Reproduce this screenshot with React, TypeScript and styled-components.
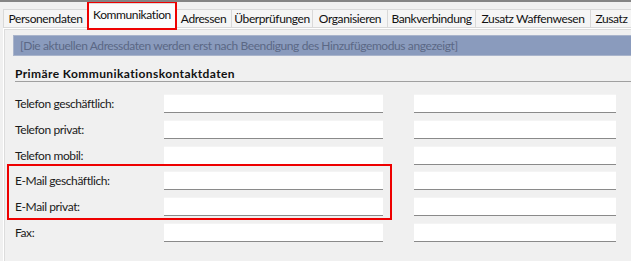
import styled, { createGlobalStyle } from "styled-components";

const GlobalStyle = createGlobalStyle`
  body {
    margin: 0;
    background: #f0f0f0;
    font-family: Lato, "Liberation Sans", sans-serif;
    font-size: 12px;
    line-height: 15px;
    letter-spacing: -0.4px;
    color: #1a1a1a;
    overflow: hidden;
  }
`;

const Window = styled.div`
  width: 631px;
  height: 261px;
  border-top: 2px solid #848484;
  box-sizing: border-box;
  overflow: hidden;
`;

const TabStrip = styled.div`
  display: flex;
  align-items: flex-end;
  height: 26px;
  padding-left: 3px;
  white-space: nowrap;
`;

const Tab = styled.div<{ $w: number; $active?: boolean }>`
  position: relative;
  flex: 0 0 ${(p) => p.$w}px;
  min-width: 0;
  box-sizing: border-box;
  height: ${(p) => (p.$active ? 27 : 19)}px;
  margin-bottom: ${(p) => (p.$active ? -2 : 0)}px;
  padding: ${(p) => (p.$active ? "3px 0 0" : "1px 0 0")};
  text-align: center;
  background: ${(p) => (p.$active ? "#fbfbfb" : "#f5f5f5")};
  border: 1px solid #d9d9d9;
  border-bottom: ${(p) => (p.$active ? "none" : "1px solid #d9d9d9")};
  border-left-width: ${(p) => (p.$active ? 1 : 0)}px;
  z-index: ${(p) => (p.$active ? 2 : 1)};
  color: #111;

  &:first-child {
    border-left-width: 1px;
  }

  ${(p) =>
    p.$active &&
    `
    &::after {
      content: "";
      position: absolute;
      left: -2px;
      right: -2px;
      top: -3px;
      bottom: 0px;
      border: 2px solid #ee0000;
      pointer-events: none;
    }
  `}
`;

const Panel = styled.div`
  position: relative;
  margin-left: 3px;
  border-top: 1px solid #ffffff;
  border-left: 1px solid #ffffff;
  box-shadow: inset 1px 1px 0 #dcdcdc;
  height: 240px;
  padding: 6px 0 0 9px;
  box-sizing: border-box;
`;

const InfoBar = styled.div`
  height: 21px;
  box-sizing: border-box;
  margin-right: -4px;
  background: #8a9bbd;
  border: 1px solid #a9b4cb;
  color: #5b6885;
  padding: 2px 0 0 6px;
  white-space: nowrap;
`;

const Section = styled.div`
  margin-top: 11px;
  padding-left: 2px;
`;

const SectionTitle = styled.div`
  font-weight: 700;
  letter-spacing: 0.4px;
  color: #111;
  line-height: 14px;
  border-bottom: 1px solid #a0a0a0;
  margin-right: -4px;
  margin-bottom: 12px;
`;

const Rows = styled.div`
  display: flex;
  flex-direction: column;
  gap: 6.8px;
`;

const Highlight = styled.div`
  position: relative;
  display: flex;
  flex-direction: column;
  gap: 6.8px;

  &::after {
    content: "";
    position: absolute;
    left: -8px;
    top: -7px;
    bottom: -4px;
    width: 385px;
    box-sizing: border-box;
    border: 2px solid #ee0000;
    pointer-events: none;
  }
`;

const Row = styled.div`
  display: grid;
  grid-template-columns: 149px 219px 31px 202px;
  align-items: center;
  height: 19px;
`;

const Label = styled.span`
  color: #1a1a1a;
  white-space: nowrap;
`;

const Field = styled.div<{ $col: number }>`
  grid-column: ${(p) => p.$col};
  height: 19px;
  box-sizing: border-box;
  background: #ffffff;
  border-bottom: 1px solid #8a8a8a;
  box-shadow: inset 0 1px 0 #f4f4f4;
`;

const tabs = [
  { label: "Personendaten", w: 85 },
  { label: "Kommunikation", w: 88, active: true },
  { label: "Adressen", w: 56 },
  { label: "Überprüfungen", w: 81 },
  { label: "Organisieren", w: 75 },
  { label: "Bankverbindung", w: 88 },
  { label: "Zusatz Waffenwesen", w: 115 },
  { label: "Zusatz", w: 42 },
];

function FieldRow({ label }: { label: string }) {
  return (
    <Row>
      <Label>{label}</Label>
      <Field $col={2} />
      <Field $col={4} />
    </Row>
  );
}

export default function App() {
  return (
    <>
      <GlobalStyle />
      <Window>
        <TabStrip>
          {tabs.map((t) => (
            <Tab key={t.label} $w={t.w} $active={t.active}>
              {t.label}
            </Tab>
          ))}
        </TabStrip>
        <Panel>
          <InfoBar>
            [Die aktuellen Adressdaten werden erst nach Beendigung des Hinzufügemodus angezeigt]
          </InfoBar>
          <Section>
            <SectionTitle>Primäre Kommunikationskontaktdaten</SectionTitle>
            <Rows>
              <FieldRow label="Telefon geschäftlich:" />
              <FieldRow label="Telefon privat:" />
              <FieldRow label="Telefon mobil:" />
              <Highlight>
                <FieldRow label="E-Mail geschäftlich:" />
                <FieldRow label="E-Mail privat:" />
              </Highlight>
              <FieldRow label="Fax:" />
            </Rows>
          </Section>
        </Panel>
      </Window>
    </>
  );
}
